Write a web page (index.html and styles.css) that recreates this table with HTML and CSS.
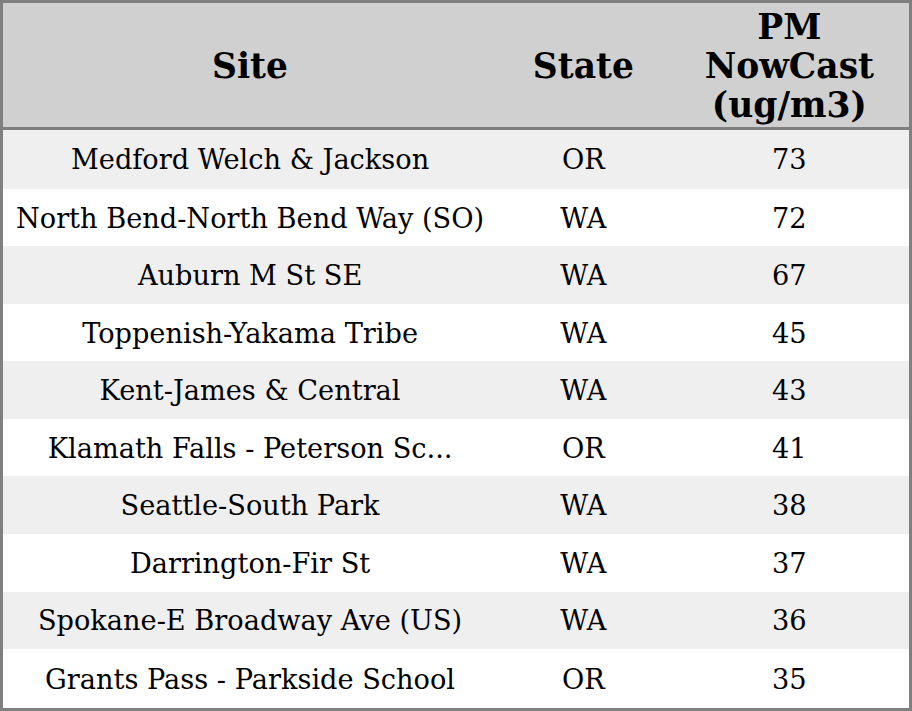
FILE: index.html
```html
<!DOCTYPE html>
<html>
<head>
<meta charset="utf-8">
<link rel="stylesheet" href="styles.css">
</head>
<body>
<table class="grid">
  <colgroup>
    <col class="c-site">
    <col class="c-state">
    <col class="c-pm">
  </colgroup>
  <thead>
    <tr><th>Site</th><th>State</th><th>PM<br>NowCast<br>(ug/m3)</th></tr>
  </thead>
  <tbody>
    <tr><td>Medford Welch &amp; Jackson</td><td>OR</td><td>73</td></tr>
    <tr><td>North Bend-North Bend Way (SO)</td><td>WA</td><td>72</td></tr>
    <tr><td>Auburn M St SE</td><td>WA</td><td>67</td></tr>
    <tr><td>Toppenish-Yakama Tribe</td><td>WA</td><td>45</td></tr>
    <tr><td>Kent-James &amp; Central</td><td>WA</td><td>43</td></tr>
    <tr><td>Klamath Falls - Peterson Sc...</td><td>OR</td><td>41</td></tr>
    <tr><td>Seattle-South Park</td><td>WA</td><td>38</td></tr>
    <tr><td>Darrington-Fir St</td><td>WA</td><td>37</td></tr>
    <tr><td>Spokane-E Broadway Ave (US)</td><td>WA</td><td>36</td></tr>
    <tr><td>Grants Pass - Parkside School</td><td>OR</td><td>35</td></tr>
  </tbody>
</table>
</body>
</html>
```
FILE: styles.css
```css
html, body {
  margin: 0;
  padding: 0;
  background: #ffffff;
}
.grid {
  width: 912px;
  height: 711px;
  border-collapse: collapse;
  table-layout: fixed;
  border: 3px solid #808080;
  font-family: "DejaVu Serif", serif;
  color: #000;
}
.c-site { width: 494px; }
.c-state { width: 172px; }
.c-pm { width: 240px; }
.grid th {
  background: #d0d0d0;
  font-size: 34.5px;
  font-weight: bold;
  line-height: 39px;
  height: 127px;
  padding: 2px 0 0;
  text-align: center;
  vertical-align: middle;
  border-bottom: 3px solid #808080;
  box-sizing: border-box;
}
.grid td {
  font-size: 27.2px;
  padding: 1px 0 0;
  text-align: center;
  vertical-align: middle;
  white-space: nowrap;
}
.grid tbody tr:nth-child(odd) td { background: #efefef; }
```
